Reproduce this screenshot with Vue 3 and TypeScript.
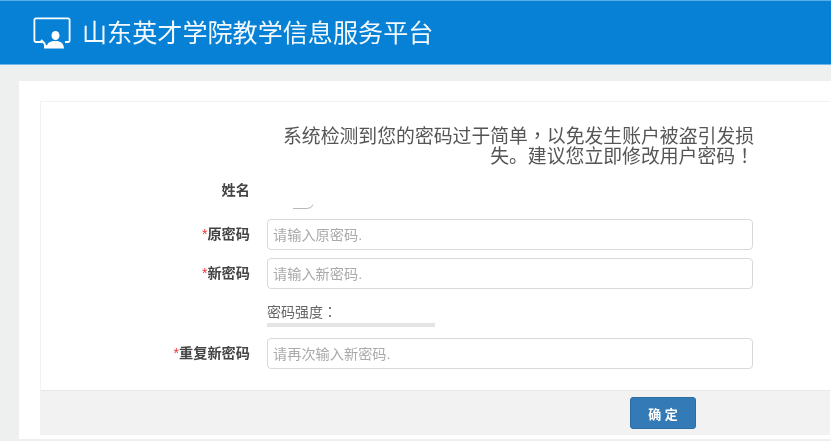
<script setup lang="ts">
interface Field { label: string; placeholder: string }
const first: Field[] = [
  { label: '原密码', placeholder: '请输入原密码.' },
  { label: '新密码', placeholder: '请输入新密码.' },
]
const repeat: Field = { label: '重复新密码', placeholder: '请再次输入新密码.' }
</script>

<template>
  <div class="page">
    <header class="top">
      <svg class="logo" width="38" height="32" viewBox="0 0 38 32" fill="none" stroke="#fff">
        <path d="M9 25H3a1.6 1.6 0 0 1-1.6-1.6V3A1.6 1.6 0 0 1 3 1.4h32A1.6 1.6 0 0 1 36.6 3v20.4A1.6 1.6 0 0 1 35 25h-3" stroke-width="1.8" />
        <ellipse cx="22.5" cy="18.5" rx="4" ry="4.6" fill="#fff" stroke="none" />
        <path d="M11 26l3 2.5c1-3 3-4.5 8.500-4.500s8 2 8.500 7.500H11z" fill="#fff" stroke="none" />
        <path d="M8 23l4 4" stroke-width="2" />
      </svg>
      <h1 class="title">山东英才学院教学信息服务平台</h1>
    </header>
    <main class="outer">
      <section class="card">
        <div class="body">
          <p class="notice">系统检测到您的密码过于简单<span class="tc">，</span>以免发生账户被盗引发损<br />失。建议您立即修改用户密码<span class="tc">！</span></p>
          <div class="row name-row">
            <span class="label">姓名</span>
            <svg class="mark" width="24" height="10" viewBox="0 0 24 10" fill="none" stroke="#b5b8bc" stroke-width="1">
              <path d="M1 7.500h14l4-1 2-3" />
            </svg>
          </div>
          <div v-for="f in first" :key="f.label" class="row field-row">
            <label class="label"><i>*</i>{{ f.label }}</label>
            <input class="input" type="password" :placeholder="f.placeholder" />
          </div>
          <div class="strength">
            <span class="strength-text">密码强度<span class="tc">：</span></span>
            <div class="bar"></div>
          </div>
          <div class="row field-row">
            <label class="label"><i>*</i>{{ repeat.label }}</label>
            <input class="input" type="password" :placeholder="repeat.placeholder" />
          </div>
        </div>
        <footer class="foot">
          <button class="ok" type="button">确 定</button>
        </footer>
      </section>
    </main>
  </div>
</template>

<style scoped>
.page {
  width: 831px;
  height: 441px;
  overflow: hidden;
  background: #eef0ef;
  font-family: "Liberation Sans", "Noto Sans CJK SC", sans-serif;
  filter: blur(0.6px);
}
.top {
  height: 65px;
  box-sizing: border-box;
  border-top: 1px solid #5aaee4;
  border-bottom: 1px solid #6cb8ea;
  background: #0681d6;
  display: flex;
  align-items: center;
  padding-left: 33px;
  gap: 11px;
}
.logo { flex: none; }
.title {
  margin: 0;
  color: #f4f9fd;
  font-size: 25.1px;
  font-weight: 400;
  line-height: 32px;
  white-space: nowrap;
}
.tc { font-family: "Noto Sans CJK TC", sans-serif; line-height: 0; }
.outer {
  margin: 16px 0 0 19px;
  height: 358px;
  background: #fff;
  padding: 20px 0 0 21px;
  box-sizing: border-box;
}
.card {
  height: 334px;
  width: 790px;
  border-top: 1px solid #f2f2f2;
  border-left: 1px solid #f2f2f2;
  box-sizing: border-box;
  display: flex;
  flex-direction: column;
}
.body { flex: 1; padding-top: 25px; }
.notice {
  margin: 0 0 0 242px;
  width: 471px;
  height: 39px;
  font-size: 18.85px;
  line-height: 19.5px;
  color: #555;
  text-align: right;
  white-space: nowrap;
}
.row { display: flex; align-items: center; }
.label {
  width: 209px;
  flex: none;
  text-align: right;
  font-size: 14.2px;
  font-weight: 700;
  color: #444;
  white-space: nowrap;
  margin-top: -3px;
}
.label i { color: #e33; font-style: normal; font-weight: 400; }
.name-row { height: 38px; margin-top: 15px; align-items: flex-start; padding-top: 1px; box-sizing: border-box; }
.name-row .label { line-height: 16px; margin-top: 0; }
.mark { margin: 19px 0 0 42px; }
.field-row { margin-top: 8px; }
.name-row + .field-row { margin-top: 0; }
.input {
  margin-left: 17px;
  width: 486px;
  height: 31px;
  box-sizing: border-box;
  border: 1px solid #d9d9d9;
  border-radius: 4px;
  padding: 0 5px;
  outline: none;
  background: #fff;
  font: 14.2px "Liberation Sans", "Noto Sans CJK SC", sans-serif;
}
.input::placeholder { color: #aaa; opacity: 1; }
.strength { margin: 15px 0 0 226px; width: 168px; }
.strength-text { display: block; font-size: 14px; line-height: 16px; color: #666; }
.bar { height: 4px; margin-top: 3px; background: #e4e4e4; }
.strength + .row { margin-top: 11px; }
.foot {
  height: 45px;
  flex: none;
  background: #f2f2f2;
  border-top: 1px solid #e8e8e8;
  box-sizing: border-box;
  padding: 6px 0 0 589px;
}
.ok {
  display: block;
  width: 66px;
  height: 32px;
  padding: 0;
  border: 1px solid #2e6da4;
  border-radius: 3px;
  background: #337ab7;
  color: #fff;
  font: 700 13px "Liberation Sans", "Noto Sans CJK SC", sans-serif;
}
</style>
